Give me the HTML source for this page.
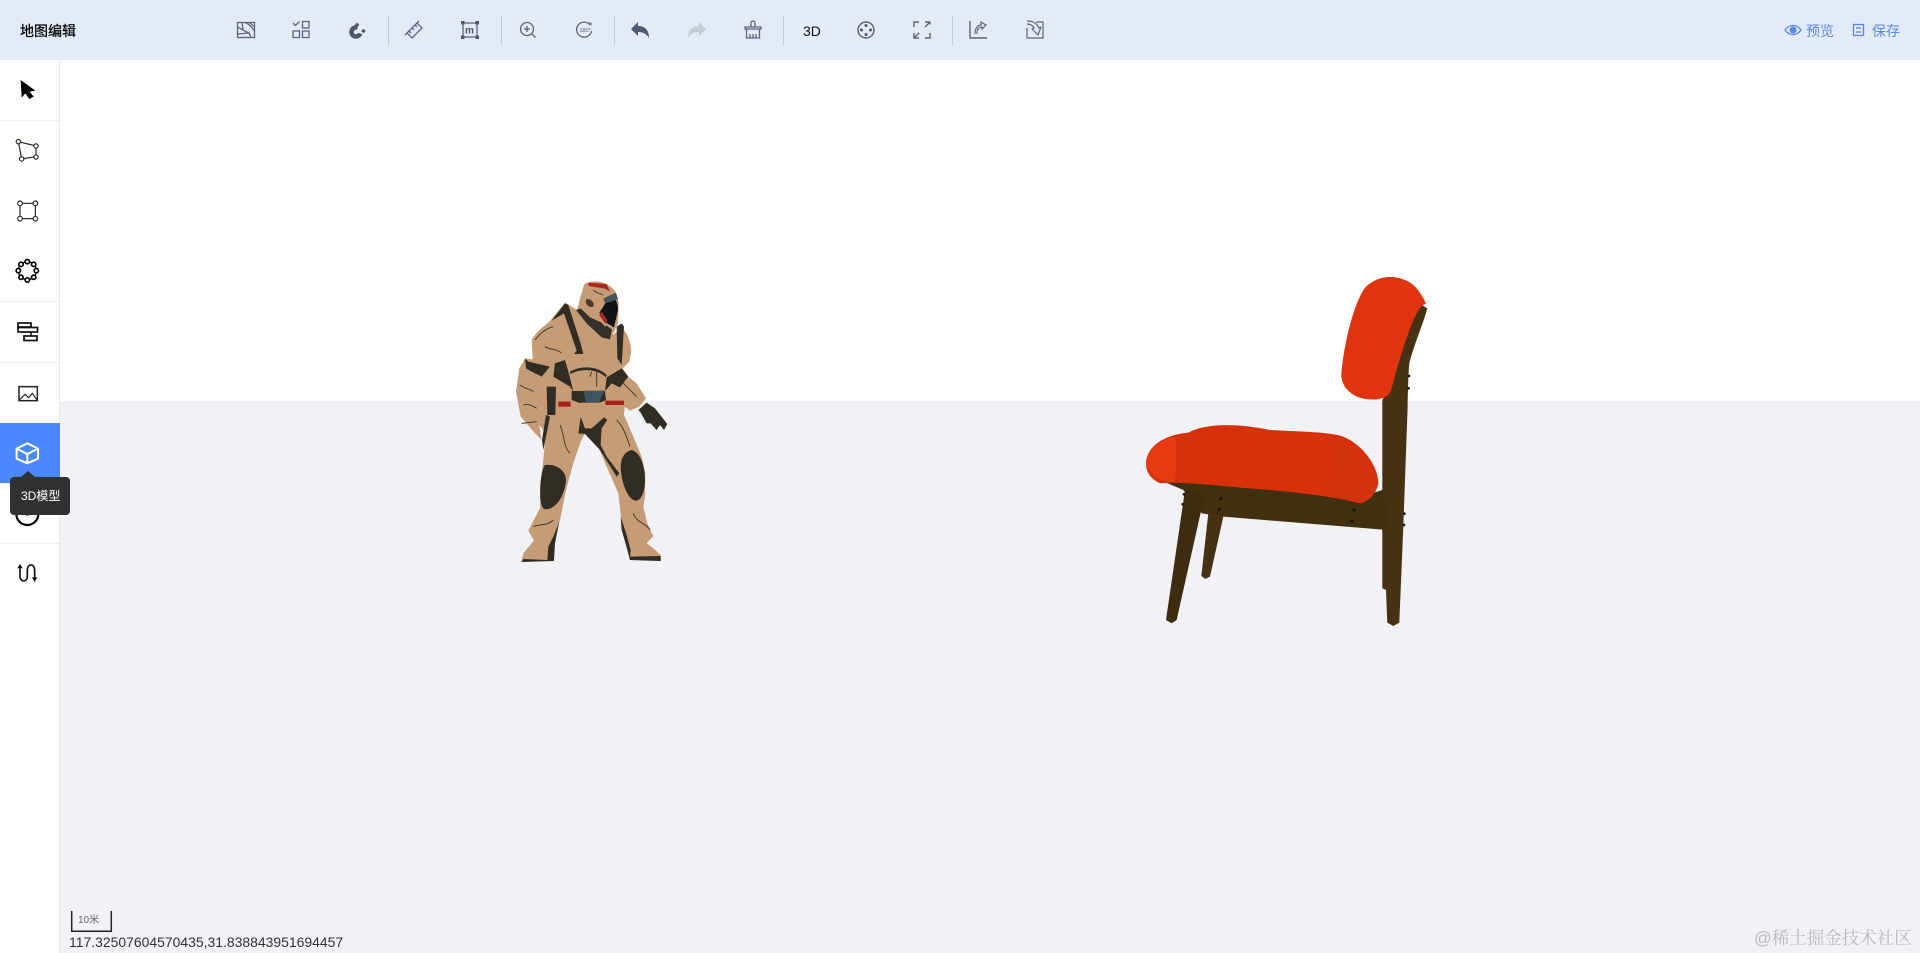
<!DOCTYPE html>
<html lang="zh"><head><meta charset="utf-8"><title>地图编辑</title>
<style>
html,body{margin:0;padding:0;width:1920px;height:953px;overflow:hidden;background:#fff;font-family:"Liberation Sans","Noto Sans CJK SC",sans-serif}
div{position:absolute;white-space:nowrap}
svg{position:absolute;left:0;top:0}
.soft{filter:blur(.55px)}
</style></head><body>
<div style="left:0;top:401px;width:1920px;height:552px;background:#f0f2f6"></div>
<div style="left:0;top:0;width:1920px;height:60px;background:#e3ebf8"></div>
<div style="left:0;top:60px;width:59px;height:893px;background:#fff;border-right:1px solid #e8eaee"></div>
<div style="left:0;top:120px;width:59px;height:1px;background:#eceef1"></div>
<div style="left:0;top:301px;width:59px;height:1px;background:#eceef1"></div>
<div style="left:0;top:362px;width:59px;height:1px;background:#eceef1"></div>
<div style="left:0;top:543px;width:59px;height:1px;background:#eceef1"></div>
<div style="left:0;top:423px;width:60px;height:60px;background:#4b87ff"></div>

<svg width="1920" height="953" viewBox="0 0 1920 953" xmlns="http://www.w3.org/2000/svg">
<!-- separators -->
<g fill="#c3c9d3"><rect x="388" y="16" width="1" height="29"/><rect x="501" y="16" width="1" height="29"/><rect x="614" y="16" width="1" height="29"/><rect x="783" y="16" width="1" height="29"/><rect x="952" y="16" width="1" height="29"/></g>

<!-- toolbar icons -->
<g fill="none" stroke="#5d6678" stroke-width="1.3">
<g transform="translate(246,30)"><rect x="-8.500" y="-7.500" width="17" height="15"/><path d="M-8.500-3 L-3 0 L-4-7.500M-3 0 L3 3 L5 7.500M-1-7.500C3-6 6-3 8.500 1M3-7.500C5-6 7-5 8.500-3M-8.500 4 L3 3"/></g>
<g transform="translate(301,30)"><path d="M-8-7 L-5.500-4.500 L-1.500-8.500"/><rect x="1.500" y="-8.500" width="6.500" height="6.500"/><rect x="-8" y="1" width="6.500" height="6.500"/><rect x="1.500" y="1" width="6.500" height="6.500"/></g>
<g transform="translate(357,30)"><path d="M.5-2.200A4.500 4.500 0 1 0 3.200 3.500" stroke="#4f586a" stroke-width="4.500"/><path d="M0-7.500 L2.300-5 L0-2.800 L-2.300-5Z M6.500-1.300 L8.800 1 L6.500 3.300 L4.200 1Z" fill="#4f586a" stroke="none"/></g>
<g transform="translate(414,30)"><path d="M-7 3 L3-7 L8-2 L-2 8Z M-5 1 L-3 3M-2-2 L0 0M1-5 L3-3M-9 5 L5-9"/></g>
<g transform="translate(470,30)"><rect x="-7" y="-7" width="14" height="14"/><g fill="#4f586a" stroke="none"><rect x="-9" y="-9" width="3.500" height="3.500"/><rect x="5.500" y="-9" width="3.500" height="3.500"/><rect x="-9" y="5.500" width="3.500" height="3.500"/><rect x="5.500" y="5.500" width="3.500" height="3.500"/></g><text x="-5" y="3.500" font-size="10" font-weight="700" fill="#4f586a" stroke="none" font-family="Liberation Sans">m</text></g>
<g transform="translate(527,30)"><circle cx="0" cy="-1" r="6.500"/><path d="M-3-1H3M0-4V2M5 4 L8.500 7.500"/></g>
<g transform="translate(584,30)"><path d="M6-5A7.500 7.500 0 1 0 7.500 1" /><path d="M4.500-7 L7-7 L7-4.500" stroke-width="1"/><text x="-4.500" y="2" font-size="5.500" fill="#5d6678" stroke="none" font-family="Liberation Sans">180°</text></g>
<g transform="translate(640,30)"><path d="M-9-1 L-2-8 L-2-4 C4-4 9-1 9 8 C6 3 2 2-2 2 L-2 6Z" fill="#4f5a70" stroke="none"/></g>
<g transform="translate(697,30)"><path d="M9-1 L2-8 L2-4 C-4-4-9-1-9 8 C-6 3-2 2 2 2 L2 6Z" fill="#c6ccd6" stroke="none"/></g>
<g transform="translate(753,30)"><path d="M-2-3V-7A2 2 0 0 1 2-7V-3M-8-3H8V-1H-8ZM-6.500-1V8H6.500V-1M-3 4V8M0 4V8M3 4V8"/></g>
<g transform="translate(866,30)"><circle r="8" stroke-width="1.500"/><g fill="#4f586a" stroke="none"><circle cx="0" cy="-4.500" r="1.500"/><circle cx="0" cy="4.500" r="1.500"/><circle cx="-4.500" cy="0" r="1.500"/><circle cx="4.500" cy="0" r="1.500"/></g></g>
<g transform="translate(922,30)"><path d="M-3-8H-8V-3M3-8H8M8-8L3-3M8-8V-5.500M-8 3V8H-3M8 3V8H3M-8 8L-3 3" stroke-width="1.400"/></g>
<g transform="translate(978,30)"><path d="M-8-9V8H9" stroke-width="1.400"/><path d="M-3 4C-3-2 0-5 3-5L3-8 8-5 4-1 4-3C1-3-1-1-1 4" stroke-width="1.200"/></g>
<g transform="translate(1035,30)"><path d="M1-8H8V8H-8V-2M-8-9C-3-9 2-7 4-2L6-3 3 5-3-1-1-2C-2-4-4-6-8-6" stroke-width="1.200" stroke-linejoin="round"/></g>
</g>

<!-- preview / save icons -->
<g fill="none" stroke="#5a87ea" stroke-width="1.300">
<path d="M1785 30C1789 24 1797 24 1801 30C1797 36 1789 36 1785 30Z"/><circle cx="1793" cy="30" r="2.800" fill="#5a87ea"/>
<rect x="1853.500" y="24.500" width="10" height="11"/><path d="M1856 28H1861M1856 32H1861"/>
</g>

<!-- sidebar icons -->
<g transform="translate(0,60) scale(.3333)">
<path d="M62 60 L106 92 L89 95 L101 110 L88 117 L76 100 L65 113Z" fill="#000"/>
<g fill="#fff" stroke="#223" stroke-width="3.500">
<path d="M55 245 L108 258 L108 290 L65 297Z" fill="none"/><circle cx="55" cy="245" r="6.500"/><circle cx="108" cy="258" r="6.500"/><circle cx="108" cy="291" r="6.500"/><circle cx="65" cy="297" r="6.500"/>
<rect x="60" y="430" width="46" height="46" fill="none"/><circle cx="60" cy="430" r="7"/><circle cx="106" cy="430" r="7"/><circle cx="60" cy="476" r="7"/><circle cx="106" cy="476" r="7"/>
</g>
<circle cx="82" cy="632" r="27" fill="none" stroke="#000" stroke-width="4"/>
<g fill="#fff" stroke="#000" stroke-width="5"><circle cx="82" cy="605" r="6.500"/><circle cx="101" cy="613" r="6.500"/><circle cx="109" cy="632" r="6.500"/><circle cx="101" cy="652" r="6.500"/><circle cx="82" cy="660" r="6.500"/><circle cx="63" cy="652" r="6.500"/><circle cx="55" cy="632" r="6.500"/><circle cx="63" cy="613" r="6.500"/></g>
</g>
<g fill="#fff" stroke="#111" stroke-width="1.700">
<path d="M24 327V333M31 332V337" stroke="#333" fill="none"/>
<rect x="18" y="323" width="13" height="4"/><rect x="18" y="327.500" width="19.500" height="4.500"/><rect x="24" y="336" width="13" height="4.500"/>
</g>
<g transform="translate(0,350) scale(.3333)">
<rect x="57" y="110" width="55" height="42" fill="none" stroke="#222" stroke-width="4.500"/><path d="M58 150 L75 133 L86 143 L97 130 L111 150" fill="none" stroke="#222" stroke-width="3.500"/>
<g fill="none" stroke="#fff" stroke-width="6" stroke-linejoin="round"><path d="M82 280 L114 296 V326 L82 340 L50 326 V296Z"/><path d="M50 296 L82 312 L114 296M82 312V340"/></g>
<circle cx="82" cy="492" r="33" fill="none" stroke="#000" stroke-width="6.500"/><circle cx="82" cy="492" r="5" fill="#000"/>
<g fill="none" stroke="#111" stroke-width="5"><path d="M60 655V680C60 697 82 697 82 680V660C82 640 104 640 104 660V682"/></g>
<path d="M52 655 L60 642 L68 655Z M96 682 H112 L104 696Z" fill="#111"/>
</g>

<!-- tooltip -->
<path d="M21 477 L28 471 L35 477Z" fill="#303133"/>
<rect x="10" y="477" width="60" height="38" rx="4" fill="#303133"/>

<!-- soldier -->
<g class="soft" transform="translate(490,260) scale(.3333)">
<path d="M283 72C310 58 355 62 378 98L386 130 384 190 368 225 395 205C410 215 422 240 424 275L418 305 398 325 415 350 440 370 468 415 448 440 420 452 404 440 402 465 430 530 455 590 466 640 465 710 460 740 472 790 490 828 470 850 490 865 512 885 512 903 420 900 408 850 395 790 385 700 350 620 320 550 285 520 272 545 250 610 228 690 210 780 192 850 192 902 95 906 100 880 132 842 115 812 150 745 150 680 160 600 165 545 160 510 148 495 155 540 135 520 92 470 78 395 88 325 105 295 128 298 125 240C145 205 170 195 182 180L225 128 262 150 270 115Z" fill="#c69c76"/>
<g fill="#322d24">
<path d="M105 295L115 305 180 320 155 350 125 335 108 325Z"/>
<path d="M195 310L225 300 238 345 250 395 240 380 190 350Z"/>
<path d="M240 335C270 318 320 315 350 345L348 352C320 325 270 325 242 342Z"/>
<path d="M350 352L395 325 415 350 390 382 365 370 345 393Z"/>
<path d="M245 393H345L348 420 330 428 272 430 245 420Z"/>
<path d="M170 380H198L196 465 172 465ZM168 465 180 470 160 570 156 540Z"/>
<path d="M272 470L286 505 340 470 352 480 335 505 332 555 350 590 388 640 380 650 330 570 285 522 265 520Z"/>
<path d="M165 615C195 610 228 630 228 660 225 710 195 750 165 748 148 745 150 690 152 665 155 640 158 625 165 615Z"/>
<path d="M425 570C455 580 465 625 465 660 465 700 450 725 435 722 410 715 392 660 392 615 395 590 405 575 425 570Z"/>
<path d="M445 450L470 428 495 445 532 492 522 510 510 495 500 510 482 490 470 490 452 458Z"/>
<path d="M225 130L235 135 272 250 280 282 252 282 260 272 222 160 185 182Z"/>
<path d="M395 190L402 200 395 315 382 295 380 200Z"/>
<path d="M208 785L195 850 192 900 172 900 175 860 190 830Z"/>
<path d="M392 770L410 825 422 870 420 900 408 855 395 810Z"/>
<path d="M95 906L100 897 170 900 192 900V903Z"/>
<path d="M420 890L512 888V903L420 900Z"/>
</g>
<path d="M258 150L290 190 335 232 360 238 366 208 340 190 300 172 272 145Z" fill="#34302a"/>
<path d="M358 112C372 108 384 122 384 150L372 202 352 190 328 158Z" fill="#101418"/>
<path d="M322 150L352 195 345 200 315 165Z" fill="#c69c76"/><path d="M335 155L352 180 347 192 328 166Z" fill="#a8281f"/>
<path d="M295 68L350 72 360 95 345 86 296 78Z" fill="#a8281f"/>
<path d="M340 115L378 98 384 118 345 130Z" fill="#46565c"/>
<path d="M288 118C300 115 315 125 310 140 295 145 285 132 288 118Z" fill="#4a3c2e"/>
<path d="M280 392H342L328 426 288 426Z" fill="#3f5560"/>
<path d="M205 425H242V440H205ZM346 422H402V435H346Z" fill="#a8201a"/>
<path d="M272 428H330L345 440 342 472 305 505 285 505 272 470Z" fill="#c69c76"/>
<g fill="none" stroke="#4a3c2e" stroke-width="3"><path d="M165 260C180 270 200 265 215 280M135 240C150 220 170 205 190 200M310 90C320 100 330 100 340 105M90 375C110 390 120 385 130 395M100 435C120 430 130 440 140 445M95 490L140 485M210 495C225 530 220 560 240 580M380 480C400 500 410 530 420 560M130 800C150 790 170 800 190 780M430 760C440 790 470 790 480 810M305 335L300 350M320 330V380M400 370L440 410"/></g>
</g>

<!-- chair -->
<g class="soft" transform="translate(1130,260) scale(.3333)">
<path d="M860 125L892 145C880 190 850 260 838 310 835 340 833 420 833 440L820 800 808 1088 790 1098 772 1088 768 990 757 985 757 800 757 420 780 380Z" fill="#463212"/>
<path d="M90 660L690 712 757 690 772 745 772 810 280 770 215 760 160 690Z" fill="#40300f"/>
<path d="M165 690L225 700 140 1080 125 1090 108 1080Z" fill="#3e2c10"/>
<path d="M235 760L280 770 240 950 226 957 214 948Z" fill="#463212"/>
<g fill="#15130f"><circle cx="272" cy="716" r="5"/><circle cx="268" cy="748" r="5"/><circle cx="672" cy="750" r="5"/><circle cx="666" cy="783" r="5"/><circle cx="162" cy="703" r="4"/><circle cx="158" cy="733" r="4"/><circle cx="837" cy="348" r="4"/><circle cx="836" cy="385" r="4"/><circle cx="823" cy="761" r="4"/><circle cx="822" cy="795" r="4"/></g>
<path d="M700 90C730 48 800 35 850 75 868 92 882 115 888 132 868 132 845 185 815 280 800 325 790 370 780 400 765 420 720 425 680 410 645 392 630 365 635 330 642 260 665 150 700 90Z" fill="#e0330f"/>
<path d="M48 610C50 560 100 525 175 518 215 495 300 485 420 510 500 515 600 515 640 530 700 555 745 620 745 670 740 700 715 725 690 730 620 712 500 695 350 685 250 675 150 665 90 670 60 655 48 635 48 610Z" fill="#d6310a"/>
<path d="M135 530C140 570 140 610 135 665 100 668 60 655 48 610 50 570 90 535 135 530Z" fill="#e63a12"/>
<path d="M600 535C650 545 710 590 735 650L742 680C735 705 715 725 690 730 660 722 620 712 580 705 610 650 615 590 600 535Z" fill="#d2320d"/>
</g>

<!-- scale ruler -->
<path d="M71.700 911V931.300H111.300V911" fill="none" stroke="#222" stroke-width="1.500"/>
</svg>

<div style="left:20px;top:21px;font-size:14px;line-height:20px;font-weight:400;color:#000;-webkit-text-stroke:.25px #000">地图编辑</div>
<div style="left:803px;top:21px;font-size:14px;line-height:20px;color:#111">3D</div>
<div style="left:1806px;top:21px;font-size:14px;line-height:20px;color:#5a87ea">预览</div>
<div style="left:1872px;top:21px;font-size:14px;line-height:20px;color:#5a87ea">保存</div>
<div style="left:21px;top:487px;font-size:12px;line-height:18px;color:#fff">3D模型</div>
<div style="left:78px;top:914px;font-size:10px;line-height:13px;color:#666">10米</div>
<div style="left:69px;top:934px;font-size:13.950px;line-height:16px;color:#333">117.32507604570435,31.838843951694457</div>
<div style="left:1754px;top:926px;font-size:17.500px;line-height:24px;color:#b9bbbe;font-family:'Liberation Sans','Noto Serif CJK SC',serif">@稀土掘金技术社区</div>
</body></html>
